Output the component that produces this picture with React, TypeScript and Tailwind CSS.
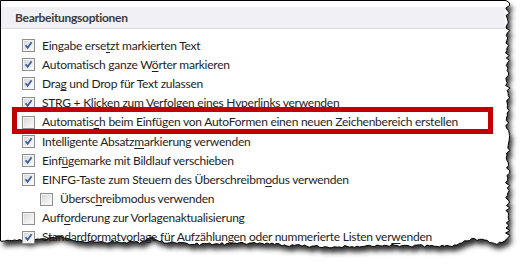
import React from 'react';

type Option = {
  before: string;
  accel?: string;
  after?: string;
  checked: boolean;
  indent?: boolean;
  marked?: boolean;
};

const options: Option[] = [
  { before: 'Eingabe erse', accel: 't', after: 'zt markierten Text', checked: true },
  { before: 'Automatisch ganze W', accel: 'ö', after: 'rter markieren', checked: true },
  { before: 'Dra', accel: 'g', after: ' und Drop für Text zulassen', checked: true },
  { before: 'STRG + Klicken zum Verfolgen eines Hyperlinks verwenden', checked: true },
  {
    before: 'Automatis',
    accel: 'c',
    after: 'h beim Einfügen von AutoFormen einen neuen Zeichenbereich erstellen',
    checked: false,
    marked: true,
  },
  { before: 'Intelligente Absatz', accel: 'm', after: 'arkierung verwenden', checked: true },
  { before: 'Einf', accel: 'ü', after: 'gemarke mit Bildlauf verschieben', checked: true },
  { before: 'EINFG-Taste zum Steuern des Überschreibm', accel: 'o', after: 'dus verwenden', checked: true },
  { before: 'Übersc', accel: 'h', after: 'reibmodus verwenden', checked: false, indent: true },
  { before: 'Auff', accel: 'o', after: 'rderung zur Vorlagenaktualisierung', checked: false },
  {
    before: 'Standardformatvorlage für Aufzählungen oder nummerierte Listen ver',
    accel: 'w',
    after: 'enden',
    checked: true,
  },
];

// torn paper edge, fixed seed so it looks the same every time
function makeRandom(seed: number) {
  let s = seed;
  return () => {
    s = (s * 9301 + 49297) % 233280;
    return s / 233280;
  };
}

const bottomKeys: [number, number][] = [
  [508, 238], [496, 245], [484, 240], [470, 239], [458, 245], [430, 246], [380, 245],
  [330, 247], [290, 245], [263, 243], [200, 244], [165, 242], [152, 238], [140, 242],
  [100, 242], [72, 241], [60, 235], [50, 238], [38, 240], [0, 241],
];

function baseY(x: number) {
  for (let i = 0; i < bottomKeys.length - 1; i++) {
    const [x1, y1] = bottomKeys[i];
    const [x2, y2] = bottomKeys[i + 1];
    if (x <= x1 && x >= x2) return y1 + ((x1 - x) / (x1 - x2)) * (y2 - y1);
  }
  return 241;
}

function paperPoints() {
  const r = makeRandom(17);
  const pts: string[] = ['0.5,0.5', '506,0.5'];
  for (let y = 3; y < 236; y += 2.5) {
    pts.push(`${(505.5 + r() * 4.5).toFixed(1)},${y.toFixed(1)}`);
  }
  for (let x = 507; x > 1; x -= 2.5) {
    pts.push(`${x.toFixed(1)},${(baseY(x) + r() * 2.5 - 1).toFixed(1)}`);
  }
  pts.push('0.5,241');
  return pts.join(' ');
}

const paper = paperPoints();

const Checkbox: React.FC<{ checked: boolean }> = ({ checked }) => (
  <span className="flex h-[13px] w-[13px] shrink-0 items-center justify-center border border-[#8e8f8f] bg-white">
    <span className="relative h-[11px] w-[11px] border border-[#f4f4f4] bg-gradient-to-br from-[#d9d9d9] to-[#fbfbfb]">
      {checked && (
        <svg className="absolute -left-px -top-px" width="11" height="11" viewBox="0 0 11 11">
          <path d="M2.5 5.2 L4.6 7.8 L8.6 2.2" fill="none" stroke="#3c5a9e" strokeWidth="1.7" />
        </svg>
      )}
    </span>
  </span>
);

export default function App() {
  return (
    <div className="relative h-[266px] w-[526px] overflow-hidden bg-white font-['Lato',sans-serif] text-[12px] text-[#1e1e1e]">
      <svg className="absolute inset-0" width="526" height="266">
        <defs>
          <filter id="blur" x="-10%" y="-10%" width="120%" height="130%">
            <feGaussianBlur stdDeviation="2.4" />
          </filter>
        </defs>
        <polygon points={paper} fill="#333333" filter="url(#blur)" transform="translate(3 5)" />
        <polygon points={paper} fill="#ffffff" stroke="#000000" strokeWidth="1" />
      </svg>

      <div className="relative w-[505px] pl-px pt-[7px]">
        <div className="flex h-[22px] w-[504px] items-center border-b border-[#dcdce2] bg-[#f0f0f5] pl-[14px] font-bold tracking-[-0.3px] text-[#3b3b3b]">
          Bearbeitungsoptionen
        </div>

        <div className="pt-[7px]">
          {options.map((o, i) => (
            <div
              key={i}
              className={`relative flex h-[19.2px] items-center gap-[7px] ${o.indent ? 'pl-[39px]' : 'pl-[21px]'}`}
            >
              {o.marked && (
                <span className="pointer-events-none absolute -bottom-[2px] -top-[6px] left-[11px] right-[12px] border-[5px] border-[#c00000]" />
              )}
              <Checkbox checked={o.checked} />
              <span className="whitespace-nowrap leading-none tracking-[-0.25px]">
                {o.before}
                {o.accel && <span className="underline underline-offset-2">{o.accel}</span>}
                {o.after}
              </span>
            </div>
          ))}
        </div>
      </div>
    </div>
  );
}
